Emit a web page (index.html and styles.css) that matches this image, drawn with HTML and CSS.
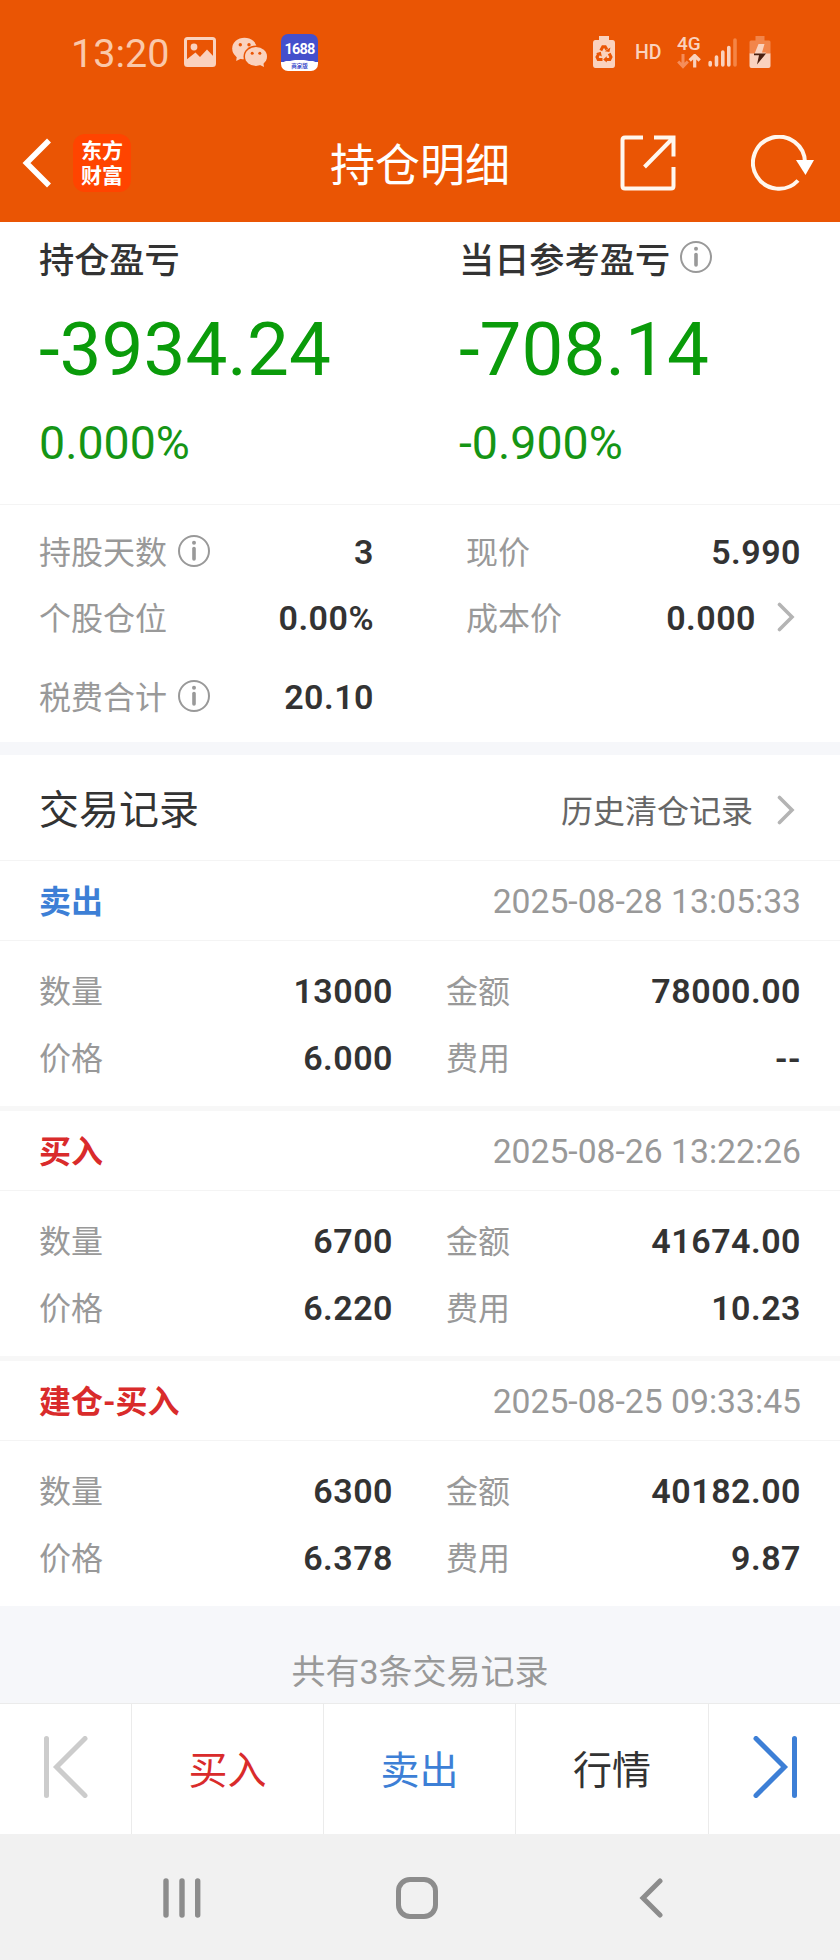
FILE: index.html
```html
<!DOCTYPE html>
<html lang="zh-CN">
<head>
	<meta charset="utf-8">
	<title>持仓明细</title>
	<link rel="stylesheet" href="styles.css">
</head>
<body>
	<!-- icons used more than once -->
	<svg class="sprite">
		<symbol id="info" viewBox="0 0 32 32">
			<circle cx="16" cy="16" r="15" fill="none" stroke="#999" stroke-width="2"/>
			<circle cx="16" cy="7.8" r="2" fill="#999"/>
			<path d="M16 13.5V24" stroke="#999" stroke-width="3.6" stroke-linecap="round"/>
		</symbol>
		<symbol id="more" viewBox="0 0 18 30">
			<path d="M2.500 2.500l12.500 12.500L2.500 27.500" fill="none" stroke="#b4b4b4" stroke-width="3.6" stroke-linecap="round"/>
		</symbol>
	</svg>

	<header class="header">
		<div class="status">
			<span class="time">13:20</span>
			<svg class="st-pic" width="32" height="30" viewBox="0 0 32 30">
				<rect x="1.500" y="1.500" width="29" height="27" rx="2" fill="none" stroke="#fad2be" stroke-width="3"/>
				<circle cx="10" cy="10" r="3.400" fill="#fad2be"/>
				<path d="M2 23l9.500-7.500 4.500 4.500 7-7.500 7 7.500V28H2z" fill="#fad2be"/>
			</svg>
			<svg class="st-wechat" width="36" height="31" viewBox="0 0 36 31">
				<g fill="#fad2be">
					<ellipse cx="12.500" cy="11.500" rx="12.300" ry="10.800"/>
					<path d="M5 18l-.8 6 6-3z"/>
				</g>
				<ellipse cx="24" cy="19.500" rx="12.500" ry="11" fill="#ea5504"/>
				<g fill="#fad2be">
					<ellipse cx="24" cy="19.500" rx="11" ry="9.500"/>
					<path d="M26 27l6 3-1-6z"/>
				</g>
				<g fill="#ea5504">
					<circle cx="8.300" cy="7.700" r="1.700"/><circle cx="17" cy="7.700" r="1.700"/>
					<circle cx="20.200" cy="16.300" r="1.500"/><circle cx="27.800" cy="16.300" r="1.500"/>
				</g>
			</svg>
			<span class="app1688"><b>1688</b><i>商家版</i></span>

			<svg class="st-saver" width="24" height="34" viewBox="0 0 24 34">
				<path d="M7 1h10v4h3.500q2.500 0 2.500 3v22q0 3-2.500 3h-17Q1 33 1 30V8q0-3 2.500-3H7z" fill="#fad2be"/>
				<g fill="none" stroke="#ea5504" stroke-width="3">
					<path d="M8.800 15.500l2-3.700h2.400l1.600 2.800"/>
					<path d="M17.200 18.500l1.800 3.500-1.200 2.500H14"/>
					<path d="M10.500 24.500H6.200L5 22l2-3.600"/>
				</g>
				<path d="M12.800 16.200l4.600.8 1-4.600zM14.800 21.200v6.400l-3.600-3.200zM4 18.200l4.800-1.400 1 4.800z" fill="#ea5504"/>
			</svg>
			<span class="hd">HD</span>
			<span class="net">
				<b>4G</b>
				<svg width="24" height="15" viewBox="0 0 24 15">
					<path d="M6 0v12M1.200 7.500L6 12.500l4.800-5" fill="none" stroke="#f58d5a" stroke-width="3"/>
					<path d="M17.700 13.500V2M12.700 6.500l5-5 5 5" fill="none" stroke="#fad2be" stroke-width="3.200"/>
				</svg>
			</span>
			<svg class="st-signal" width="30" height="30" viewBox="0 0 30 30">
				<path d="M2.200 25.500V28M8.500 20v8M14.800 15v13M20.800 10.500V28" stroke="#fad2be" stroke-width="3.600" stroke-linecap="round"/>
				<path d="M27 3v25" stroke="#f58545" stroke-width="3.600" stroke-linecap="round"/>
			</svg>
			<svg class="st-battery" width="22" height="34" viewBox="0 0 22 34">
				<path d="M6.500 1h9v4.500H20q1.500 0 1.500 1.500v12H.5V7q0-1.500 1.500-1.500h4.500z" fill="#f2854a"/>
				<path d="M.5 18.500h21V31q0 2-2 2h-17q-2 0-2-2z" fill="#fad2be"/>
				<path d="M9.500 9h6l-2.500 8.500h4L15 20H5z" fill="#fad2be"/>
				<path d="M5 18.500h12L8 29.500l2-9.200H5z" fill="#4a2010"/>
			</svg>
		</div>

		<div class="nav">
			<div class="nav-left">
				<svg width="30" height="50" viewBox="0 0 30 50">
					<path d="M27 2.500L4.500 25 27 47.500" fill="none" stroke="#fff" stroke-width="5.600"/>
				</svg>
				<div class="logo"><span>东方</span><span>财富</span></div>
			</div>
			<h1 class="title">持仓明细</h1>
			<div class="nav-right">
				<svg width="56" height="56" viewBox="0 0 56 56">
					<path d="M23 2.500H5Q2.500 2.500 2.500 5v46q0 2.500 2.500 2.500h46q2.500 0 2.500-2.500V32M34 2.500h19.500V21.500M53 3L24.500 32" fill="none" stroke="#fff7ee" stroke-width="4"/>
				</svg>
				<svg width="64" height="56" viewBox="0 0 64 56">
					<path d="M54 27.500A26 26 0 1 0 47 45.500" fill="none" stroke="#fff7ee" stroke-width="4"/>
					<path d="M45 25h18l-8.500 15z" fill="#fff"/>
				</svg>
			</div>
		</div>
	</header>

	<section class="profit">
		<div class="profit-col">
			<div class="profit-label">持仓盈亏</div>
			<div class="profit-value">-3934.24</div>
			<div class="profit-rate">0.000%</div>
		</div>
		<div class="profit-col">
			<div class="profit-label">当日参考盈亏<svg class="info"><use href="#info"/></svg></div>
			<div class="profit-value">-708.14</div>
			<div class="profit-rate">-0.900%</div>
		</div>
	</section>

	<section class="detail">
		<div class="cell"><span>持股天数</span><svg class="info"><use href="#info"/></svg><b>3</b></div>
		<div class="cell"><span>现价</span><b>5.990</b></div>
		<div class="cell"><span>个股仓位</span><b>0.00%</b></div>
		<div class="cell"><span>成本价</span><b>0.000</b><svg class="more"><use href="#more"/></svg></div>
		<div class="cell"><span>税费合计</span><svg class="info"><use href="#info"/></svg><b>20.10</b></div>
	</section>

	<section class="records">
		<div class="records-head">
			<h2>交易记录</h2>
			<span>历史清仓记录</span>
			<svg class="more"><use href="#more"/></svg>
		</div>

		<div class="record">
			<div class="record-head"><b class="sell">卖出</b><time>2025-08-28 13:05:33</time></div>
			<div class="record-body">
				<div class="cell"><span>数量</span><b>13000</b></div>
				<div class="cell"><span>金额</span><b>78000.00</b></div>
				<div class="cell"><span>价格</span><b>6.000</b></div>
				<div class="cell"><span>费用</span><b>--</b></div>
			</div>
		</div>
		<div class="record">
			<div class="record-head"><b class="buy">买入</b><time>2025-08-26 13:22:26</time></div>
			<div class="record-body">
				<div class="cell"><span>数量</span><b>6700</b></div>
				<div class="cell"><span>金额</span><b>41674.00</b></div>
				<div class="cell"><span>价格</span><b>6.220</b></div>
				<div class="cell"><span>费用</span><b>10.23</b></div>
			</div>
		</div>
		<div class="record">
			<div class="record-head"><b class="buy">建仓-买入</b><time>2025-08-25 09:33:45</time></div>
			<div class="record-body">
				<div class="cell"><span>数量</span><b>6300</b></div>
				<div class="cell"><span>金额</span><b>40182.00</b></div>
				<div class="cell"><span>价格</span><b>6.378</b></div>
				<div class="cell"><span>费用</span><b>9.87</b></div>
			</div>
		</div>
	</section>

	<div class="total">共有3条交易记录</div>

	<div class="tabs">
		<div class="tab">
			<svg width="44" height="62" viewBox="0 0 44 62">
				<path d="M2.500 2.500v57M41 2.500L12.500 31 41 59.500" fill="none" stroke="#ccc" stroke-width="5" stroke-linecap="round"/>
			</svg>
		</div>
		<div class="tab buy">买入</div>
		<div class="tab sell">卖出</div>
		<div class="tab">行情</div>
		<div class="tab">
			<svg width="44" height="62" viewBox="0 0 44 62">
				<path d="M41.500 2.500v57M3 2.500L31.500 31 3 59.500" fill="none" stroke="#3d7fd6" stroke-width="5" stroke-linecap="round"/>
			</svg>
		</div>
	</div>

	<div class="sysnav">
		<svg width="38" height="40" viewBox="0 0 38 40">
			<path d="M3 3v34M19 3v34M34.700 3v34" stroke="#8c8c8c" stroke-width="5.400" stroke-linecap="round"/>
		</svg>
		<svg width="42" height="42" viewBox="0 0 42 42">
			<rect x="2.500" y="2.500" width="37" height="37" rx="11.500" fill="none" stroke="#8c8c8c" stroke-width="5"/>
		</svg>
		<svg width="24" height="40" viewBox="0 0 24 40">
			<path d="M21 3L4 20l17 17" fill="none" stroke="#8c8c8c" stroke-width="5" stroke-linecap="round"/>
		</svg>
	</div>
</body>
</html>
```
FILE: styles.css
```css
* {
	box-sizing: border-box;
}
body {
	margin: 0;
	width: 840px;
	background: #fff;
	color: #333;
	font-family: Roboto, "Noto Sans CJK SC", sans-serif;
	font-size: 32px;
}
svg {
	display: block;
	flex: none;
}
h1, h2 {
	margin: 0;
	font-weight: 400;
}
.sprite {
	display: none;
}
.buy {
	color: #d92b2b;
}
.sell {
	color: #3d7fd6;
}
.info {
	width: 32px;
	height: 32px;
}
.more {
	width: 18px;
	height: 30px;
}

/* header */
.header {
	height: 222px;
	background: #ea5504;
}
.status {
	display: flex;
	align-items: center;
	height: 104px;
	padding: 0 69px 0 71px;
	color: #fad2be;
}
.time {
	width: 113px;
	font-size: 39.5px;
	font-weight: 400;
	line-height: 40px;
	padding-top: 3px;
	color: #fac8aa;
}
.st-wechat {
	margin-left: 16px;
}
.app1688 {
	display: flex;
	flex-direction: column;
	align-items: center;
	width: 37px;
	height: 37px;
	margin-left: 13px;
	border-radius: 7px;
	overflow: hidden;
	background: radial-gradient(ellipse 34px 13px at 50% 39px, #fff 97%, #4450cc 100%);
	color: #fff;
}
.app1688 b {
	font-size: 14.5px;
	line-height: 18px;
	margin-top: 7px;
	letter-spacing: -0.8px;
}
.app1688 i {
	font-size: 5.5px;
	font-style: normal;
	font-weight: 700;
	line-height: 8px;
	margin-top: 3px;
	color: #4450cc;
}
.st-saver {
	margin-left: auto;
}
.hd {
	width: 42px;
	margin-left: 19px;
	font-size: 19.5px;
	font-weight: 500;
}
.net {
	width: 26px;
}
.net b {
	display: block;
	font-size: 19px;
	font-weight: 500;
	line-height: 18px;
	margin-top: -1px;
	margin-bottom: 1px;
}
.st-signal {
	margin-left: 5px;
	margin-right: 11px;
}
.nav {
	display: grid;
	grid-template-columns: 1fr auto 1fr;
	align-items: center;
	height: 118px;
	padding: 0 25px 0 22px;
	color: #fff;
}
.nav-left {
	display: flex;
	align-items: center;
	gap: 21px;
}
.nav-right {
	display: flex;
	justify-content: flex-end;
	gap: 75px;
}
.logo {
	width: 58px;
	height: 58px;
	padding-top: 3px;
	border-radius: 12px;
	background: #ff4400;
	font-family: "Noto Sans CJK SC", sans-serif;
	font-size: 21px;
	font-weight: 700;
	line-height: 25px;
	text-align: center;
}
.logo span {
	display: block;
}
.title {
	font-size: 45px;
	line-height: 60px;
	padding-top: 7px;
	padding-left: 3px;
}

/* profit summary */
.profit {
	display: flex;
	height: 283px;
	padding-left: 39px;
	border-bottom: 1px solid #f4f4f4;
}
.profit-col {
	flex: none;
	width: 420px;
}
.profit-label {
	display: flex;
	align-items: center;
	gap: 10px;
	height: 70px;
	font-size: 35.2px;
	font-weight: 500;
}
.profit-value {
	font-size: 74.6px;
	line-height: 115px;
	color: #0a9b0a;
}
.profit-rate {
	font-size: 46.5px;
	line-height: 72px;
	color: #159515;
}

/* label / value pairs */
.cell {
	display: flex;
	align-items: center;
}
.cell span {
	padding-bottom: 4px;
	color: #999;
}
.cell .info {
	margin-left: 11px;
	margin-bottom: 2px;
}
.cell b {
	margin-left: auto;
	font-size: 34px;
	font-weight: 600;
	letter-spacing: 0.5px;
}
.cell .more {
	margin-left: 21px;
	margin-right: 6px;
	margin-bottom: 2px;
}
.detail {
	display: grid;
	grid-template-columns: 335px 335px;
	grid-template-rows: 66px 66px 92px;
	column-gap: 92px;
	height: 250px;
	padding: 14px 39px 0;
	border-bottom: 13px solid #f6f7fa;
}

/* trade records */
.records-head {
	display: flex;
	align-items: center;
	height: 106px;
	padding: 0 45px 0 39px;
	border-bottom: 1px solid #f4f4f4;
}
.records-head h2 {
	flex: 1;
	font-size: 40px;
	padding-bottom: 1px;
}
.records-head span {
	padding-top: 2px;
	color: #666;
}
.records-head .more {
	margin-left: 24px;
	margin-top: 4px;
}
.record {
	height: 250px;
	border-bottom: 5px solid #f7f7f7;
}
.record:last-child {
	height: 245px;
	border-bottom: 0;
}
.record-head {
	display: flex;
	align-items: center;
	justify-content: space-between;
	height: 80px;
	padding: 0 39px;
	border-bottom: 1px solid #f4f4f4;
}
.record-head b {
	font-weight: 700;
	padding-bottom: 4px;
}
.record-head time {
	font-size: 33.7px;
	padding-top: 2px;
	color: #999;
}
.record-body {
	display: grid;
	grid-template-columns: 354px 355px;
	grid-auto-rows: 67px;
	column-gap: 53px;
	padding: 16px 39px 0;
}

.total {
	height: 97px;
	padding-top: 41px;
	background: #f6f7fa;
	color: #999;
	font-size: 34px;
	line-height: 50px;
	text-align: center;
}

/* bottom bars */
.tabs {
	display: grid;
	grid-template-columns: 132px 192px 192px 193px 131px;
	height: 131px;
	border-top: 1px solid #ebebeb;
}
.tab {
	display: flex;
	align-items: center;
	justify-content: center;
	padding-bottom: 4px;
	border-right: 1px solid #ebebeb;
	font-size: 39px;
}
.tab:last-child {
	border-right: 0;
}
.sysnav {
	display: grid;
	grid-template-columns: 233px 243px 24px;
	align-items: center;
	height: 126px;
	padding: 2px 0 0 163px;
	background: #f1f1f1;
}
```
